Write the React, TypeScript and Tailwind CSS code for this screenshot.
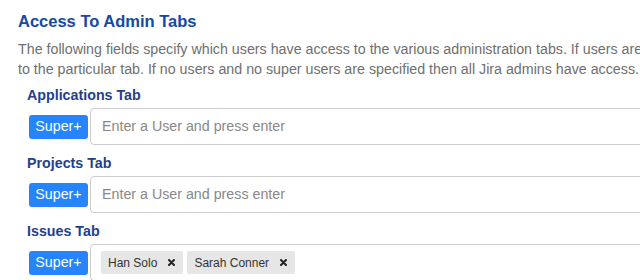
import React from "react";

const tabs = [
  { label: "Applications Tab", users: [] as string[] },
  { label: "Projects Tab", users: [] as string[] },
  { label: "Issues Tab", users: ["Han Solo", "Sarah Conner"] },
];

function Chip({ name }: { name: string }) {
  return (
    <span className="flex items-center h-[23px] pl-[7px] pr-[8px] rounded-[2px] bg-[#e6e6e6] text-[12px] text-[#333]">
      {name}
      <svg className="ml-[11px]" width="7" height="7" viewBox="0 0 7 7">
        <path d="M1 1L6 6M6 1L1 6" stroke="#222" strokeWidth="2" strokeLinecap="round" />
      </svg>
    </span>
  );
}

export default function App() {
  return (
    <div className="w-[640px] h-[280px] overflow-hidden bg-white font-['Liberation_Sans',Arial,sans-serif]">
      <div className="w-[900px] pl-[18px] pt-[11px]">
        <h3 className="text-[16.5px] leading-[20px] font-bold text-[#1549a3]">
          Access To Admin Tabs
        </h3>
        <p className="mt-[8px] text-[14.25px] leading-[20px] text-[#6f6f6f] whitespace-nowrap">
          The following fields specify which users have access to the various administration tabs. If users are
          <br />
          to the particular tab. If no users and no super users are specified then all Jira admins have access.
        </p>

        <div className="mt-[6px] pl-[9px]">
          {tabs.map((tab) => (
            <div key={tab.label} className="mb-[8px]">
              <div className="text-[14.25px] leading-[20px] font-bold text-[#223f8e]">
                {tab.label}
              </div>
              <div className="mt-[3px] flex items-center">
                <button className="ml-[2px] h-[24px] w-[59px] rounded-[3px] bg-[#2684ff] text-white text-[14.25px]">
                  Super+
                </button>
                <div className="ml-[2px] flex-1 h-[37px] border border-[#cccccc] rounded-[4px] flex items-center gap-[4px] pl-[10px]">
                  {tab.users.length === 0 ? (
                    <span className="pl-[1px] text-[14.25px] text-[#888]">
                      Enter a User and press enter
                    </span>
                  ) : (
                    tab.users.map((u) => <Chip key={u} name={u} />)
                  )}
                </div>
              </div>
            </div>
          ))}
        </div>
      </div>
    </div>
  );
}
